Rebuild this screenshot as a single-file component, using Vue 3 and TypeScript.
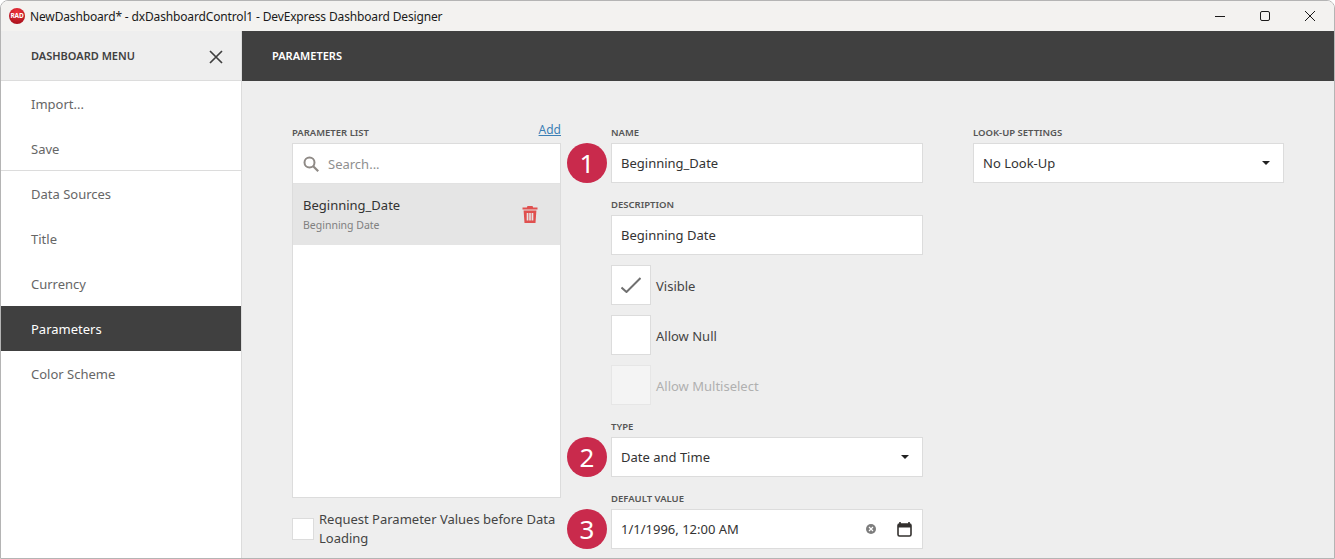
<script setup lang="ts">
const menuItems = [
  { label: 'Import...', divider: false, active: false },
  { label: 'Save', divider: true, active: false },
  { label: 'Data Sources', divider: false, active: false },
  { label: 'Title', divider: false, active: false },
  { label: 'Currency', divider: false, active: false },
  { label: 'Parameters', divider: false, active: true },
  { label: 'Color Scheme', divider: false, active: false }
]
</script>

<template>
  <div class="window">
    <header class="titlebar">
      <div class="app-logo">RAD</div>
      <span class="titlebar__text">NewDashboard* - dxDashboardControl1 - DevExpress Dashboard Designer</span>
      <div class="titlebar__buttons">
        <svg width="12" height="12" viewBox="0 0 12 12"><path d="M1 6.5h10" stroke="#1a1a1a" fill="none" /></svg>
        <svg width="12" height="12" viewBox="0 0 12 12"><rect x="1.5" y="1.5" width="9" height="9" rx="1.5" stroke="#1a1a1a" fill="none" /></svg>
        <svg width="12" height="12" viewBox="0 0 12 12"><path d="M1 1l10 10M11 1L1 11" stroke="#1a1a1a" fill="none" /></svg>
      </div>
    </header>

    <div class="body">
      <aside class="sidebar">
        <div class="sidebar__head">
          <span>DASHBOARD MENU</span>
          <svg class="sidebar__close" width="14" height="14" viewBox="0 0 14 14"><path d="M1 1l12 12M13 1L1 13" stroke="#404040" stroke-width="1.7" fill="none" /></svg>
        </div>
        <div
          v-for="item in menuItems"
          :key="item.label"
          class="menu-item"
          :class="{ 'menu-item--active': item.active, 'menu-item--divider': item.divider }"
        >
          {{ item.label }}
        </div>
      </aside>

      <main class="main">
        <div class="main__head">PARAMETERS</div>
        <div class="columns">
          <section class="col">
            <div class="label-row">
              <label class="caption">PARAMETER LIST</label>
              <a class="add-link">Add</a>
            </div>
            <div class="param-list">
              <div class="search">
                <svg width="16" height="16" viewBox="0 0 16 16">
                  <circle cx="6.5" cy="6.5" r="5" stroke="#8f8a86" stroke-width="2" fill="none" />
                  <path d="M10.2 10.2l5 5" stroke="#8f8a86" stroke-width="2.2" fill="none" />
                </svg>
                <span>Search...</span>
              </div>
              <div class="param-row">
                <div class="param-row__text">
                  <div class="param-row__name">Beginning_Date</div>
                  <div class="param-row__desc">Beginning Date</div>
                </div>
                <svg width="16" height="17" viewBox="0 0 16 17">
                  <path
                    d="M5.5 0h5l.7 1.6H15.5v2H.5v-2h4.300zM1.600 4.600h12.800l-.9 12.400h-11zM4.700 7v7.500h1.700V7zM7.200 7v7.500h1.600V7zM9.600 7v7.500h1.700V7z"
                    fill="#e0504f"
                    fill-rule="evenodd"
                  />
                </svg>
              </div>
            </div>
            <div class="request">
              <div class="check check--small"></div>
              <span>Request Parameter Values before Data Loading</span>
            </div>
          </section>

          <section class="col col--mid">
            <div class="field">
              <label class="caption">NAME</label>
              <div class="input">Beginning_Date<span class="badge">1</span></div>
            </div>
            <div class="field">
              <label class="caption">DESCRIPTION</label>
              <div class="input">Beginning Date</div>
            </div>
            <div class="checks">
              <div class="check-row">
                <div class="check">
                  <svg width="20" height="16" viewBox="0 0 20 16"><path d="M.5 10.500l5 4.500L19.500 1" stroke="#707070" stroke-width="2" fill="none" /></svg>
                </div>
                <span>Visible</span>
              </div>
              <div class="check-row">
                <div class="check"></div>
                <span>Allow Null</span>
              </div>
              <div class="check-row check-row--disabled">
                <div class="check"></div>
                <span>Allow Multiselect</span>
              </div>
            </div>
            <div class="field">
              <label class="caption">TYPE</label>
              <div class="input">
                Date and Time<span class="badge">2</span>
                <span class="caret"></span>
              </div>
            </div>
            <div class="field">
              <label class="caption">DEFAULT VALUE</label>
              <div class="input">
                1/1/1996, 12:00 AM<span class="badge">3</span>
                <svg class="clear" width="10" height="10" viewBox="0 0 10 10">
                  <circle cx="5" cy="5" r="5" fill="#7d7d7d" />
                  <path d="M3 3l4 4M7 3L3 7" stroke="#fff" stroke-width="1.200" />
                </svg>
                <svg width="15" height="15" viewBox="0 0 15 15">
                  <path d="M3 0v2M12 0v2" stroke="#33302e" stroke-width="1.600" />
                  <rect x="1" y="2" width="13" height="12" rx="1.500" stroke="#33302e" stroke-width="1.600" fill="none" />
                  <rect x="1" y="2" width="13" height="3.500" fill="#33302e" />
                </svg>
              </div>
            </div>
          </section>

          <section class="col col--right">
            <div class="field">
              <label class="caption">LOOK-UP SETTINGS</label>
              <div class="input">No Look-Up<span class="caret"></span></div>
            </div>
          </section>
        </div>
      </main>
    </div>
  </div>
</template>

<style>
html,
body {
  margin: 0;
  background: #fff;
}
</style>

<style scoped>
.window {
  width: 1335px;
  height: 559px;
  box-sizing: border-box;
  display: flex;
  flex-direction: column;
  border: 1px solid #b4b4b4;
  border-radius: 8px 8px 0 0;
  overflow: hidden;
  font-family: "Noto Sans", "Open Sans", sans-serif;
  font-size: 13px;
  color: #333;
}

.titlebar {
  height: 30px;
  flex: none;
  display: flex;
  align-items: center;
  background: #f3f2f0;
  padding-left: 8px;
  color: #1a1a1a;
  font-size: 12px;
  letter-spacing: -0.15px;
}

.app-logo {
  width: 16px;
  height: 16px;
  border-radius: 50%;
  background: radial-gradient(circle at 50% 25%, #f0323c, #9c0b16);
  color: #fff;
  font-size: 6.500px;
  font-weight: 700;
  line-height: 16px;
  text-align: center;
  margin-right: 5px;
}

.titlebar__text {
  flex: 1;
}

.titlebar__buttons {
  display: flex;
  gap: 33px;
  padding-right: 18px;
}

.body {
  flex: 1;
  display: flex;
  min-height: 0;
}

.sidebar {
  width: 241px;
  flex: none;
  box-sizing: border-box;
  background: #fff;
  border-right: 1px solid #dcdcdc;
}

.sidebar__head {
  height: 50px;
  box-sizing: border-box;
  display: flex;
  align-items: center;
  justify-content: space-between;
  background: #eeeeee;
  border-bottom: 1px solid #dcdcdc;
  padding: 0 18px 0 30px;
  font-size: 11px;
  font-weight: 600;
  color: #404040;
}

.sidebar__close {
  margin-top: 2px;
}

.menu-item {
  height: 45px;
  box-sizing: border-box;
  display: flex;
  align-items: center;
  padding-left: 30px;
  color: #666;
}

.menu-item--divider {
  box-shadow: inset 0 -1px 0 #dcdcdc;
}

.menu-item--active {
  background: #404040;
  color: #fff;
}

.main {
  flex: 1;
  display: flex;
  flex-direction: column;
  background: #eeeeee;
  min-width: 0;
}

.main__head {
  height: 50px;
  flex: none;
  box-sizing: border-box;
  display: flex;
  align-items: center;
  padding: 0 0 1px 30px;
  background: #404040;
  color: #fff;
  font-size: 11px;
  font-weight: 600;
}

.columns {
  display: flex;
  gap: 50px;
  padding: 40px 0 0 50px;
}

.col {
  width: 269px;
}

.col--mid {
  width: 312px;
  display: flex;
  flex-direction: column;
  gap: 10px;
}

.col--right {
  width: 311px;
}

.caption {
  display: block;
  height: 22px;
  line-height: 24px;
  font-size: 9.500px;
  font-weight: 600;
  color: #555;
}

.label-row {
  display: flex;
  justify-content: space-between;
  height: 22px;
}

.add-link {
  font-size: 12px;
  line-height: 18px;
  color: #3c7fb5;
  text-decoration: underline;
}

.param-list {
  height: 355px;
  box-sizing: border-box;
  background: #fff;
  border: 1px solid #dcdcdc;
}

.search {
  height: 40px;
  box-sizing: border-box;
  display: flex;
  align-items: center;
  gap: 9px;
  padding-left: 10px;
  color: #8f8f8f;
  border-bottom: 1px solid #e2e2e2;
}

.param-row {
  height: 61px;
  box-sizing: border-box;
  display: flex;
  align-items: center;
  justify-content: space-between;
  padding: 0 22px 0 10px;
  background: #e5e5e5;
}

.param-row__text {
  padding-top: 2px;
}

.param-row__name {
  line-height: 20px;
}

.param-row__desc {
  font-size: 10.500px;
  line-height: 21px;
  color: #808080;
}

.request {
  display: flex;
  align-items: center;
  gap: 5px;
  margin-top: 12px;
  line-height: 19px;
  color: #444;
}

.field {
  display: flex;
  flex-direction: column;
}

.input {
  position: relative;
  height: 40px;
  box-sizing: border-box;
  display: flex;
  align-items: center;
  padding: 0 10px 0 9px;
  background: #fff;
  border: 1px solid #dcdcdc;
  color: #333;
}

.badge {
  position: absolute;
  left: -45px;
  top: -1px;
  width: 40px;
  height: 40px;
  border-radius: 50%;
  background: #c92a4c;
  color: #fff;
  font-size: 26px;
  line-height: 40px;
  text-align: center;
}

.caret {
  margin-left: auto;
  width: 0;
  height: 0;
  margin-right: 3px;
  border-left: 4px solid transparent;
  border-right: 4px solid transparent;
  border-top: 4px solid #222;
}

.clear {
  margin-left: auto;
  margin-right: 21px;
}

.checks {
  display: flex;
  flex-direction: column;
  gap: 10px;
}

.check-row {
  display: flex;
  align-items: center;
  gap: 5px;
  color: #444;
}

.check-row span {
  padding-top: 2px;
}

.check {
  width: 40px;
  height: 40px;
  flex: none;
  box-sizing: border-box;
  display: flex;
  align-items: center;
  justify-content: center;
  background: #fff;
  border: 1px solid #dcdcdc;
}

.check--small {
  width: 22px;
  height: 22px;
}

.check-row--disabled {
  color: #b0b0b0;
}

.check-row--disabled .check {
  background: #f4f4f4;
  border-color: #e6e6e6;
}
</style>
